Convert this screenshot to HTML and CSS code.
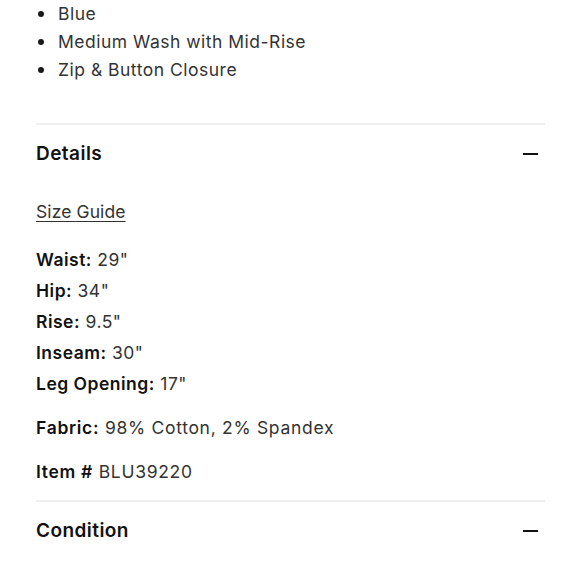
FILE: index.html
```html
<!DOCTYPE html>
<html lang="en">
<head>
<meta charset="utf-8">
<title>Details</title>
<link rel="stylesheet" href="styles.css">
</head>
<body>
<div class="page">
  <ul class="features">
    <li><span class="dot"></span>Blue</li>
    <li><span class="dot"></span>Medium Wash with Mid-Rise</li>
    <li><span class="dot"></span>Zip &amp; Button Closure</li>
  </ul>

  <section class="panel">
    <div class="panel-head">
      <h2 class="panel-title">Details</h2>
      <span class="minus"></span>
    </div>
    <div class="panel-body">
      <a class="size-guide" href="#">Size Guide</a>
      <ul class="measures">
        <li><b>Waist:</b> 29"</li>
        <li><b>Hip:</b> 34"</li>
        <li><b>Rise:</b> 9.5"</li>
        <li><b>Inseam:</b> 30"</li>
        <li><b>Leg Opening:</b> 17"</li>
      </ul>
      <p class="spec"><b>Fabric:</b> 98% Cotton, 2% Spandex</p>
      <p class="spec"><b>Item #</b> BLU39220</p>
    </div>
  </section>

  <section class="panel">
    <div class="panel-head">
      <h2 class="panel-title">Condition</h2>
      <span class="minus"></span>
    </div>
  </section>
</div>
</body>
</html>
```

FILE: styles.css
```css
html, body {
  margin: 0;
  padding: 0;
  background: #ffffff;
}

body {
  font-family: Inter, "Liberation Sans", Arial, sans-serif;
  color: #333333;
  font-size: 17.5px;
  letter-spacing: 0.5px;
}

.page {
  padding: 0 35px 0 36px;
}

.features {
  list-style: none;
  margin: 0;
  padding: 0;
}

.features li {
  display: flex;
  align-items: center;
  height: 28px;
  line-height: 28px;
  color: #333333;
}

.dot {
  width: 6px;
  height: 6px;
  border-radius: 50%;
  background: #1a1a1a;
  margin: 0 14px 0 2px;
}

.panel {
  border-top: 2px solid #eeeeee;
}

.features + .panel {
  margin-top: 39px;
}

.panel-head {
  display: flex;
  align-items: center;
  justify-content: space-between;
  height: 57px;
}

.panel-title {
  margin: 0;
  font-size: 19px;
  font-weight: 600;
  letter-spacing: 0.45px;
  color: #111111;
}

.minus {
  width: 15px;
  height: 2px;
  background: #111111;
  margin-right: 7px;
}

.panel-body {
  padding: 16px 0 13px;
}

.size-guide {
  display: block;
  line-height: 28px;
  color: #333333;
  letter-spacing: 0.1px;
  text-decoration: underline;
  text-underline-offset: 3px;
}

.measures {
  list-style: none;
  margin: 18px 0 0;
  padding: 0;
}

.measures li {
  line-height: 31px;
}

b {
  font-weight: 600;
  color: #111111;
}

.spec {
  margin: 13px 0 0;
  line-height: 31px;
  letter-spacing: 0.7px;
}
```
